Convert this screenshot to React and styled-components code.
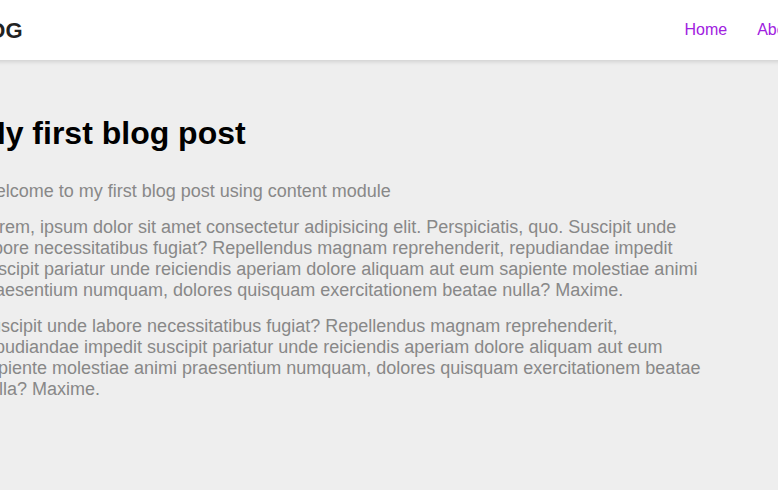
import React from 'react'
import styled, { createGlobalStyle } from 'styled-components'

const GlobalStyle = createGlobalStyle`
  html, body {
    margin: 0;
    padding: 0;
    background: #eeeeee;
    overflow: hidden;
  }
  body {
    font-family: "Liberation Sans", Arial, sans-serif;
  }
`

const links = ['Home', 'About']

function App () {
  return (
    <>
      <GlobalStyle />
      <Viewport>
        <Page>
          <Header>
            <Logo>BLOG</Logo>
            <Nav>
              {links.map(link => (
                <NavLink key={link} href='#'>{link}</NavLink>
              ))}
            </Nav>
          </Header>

          <Main>
            <Title>My first blog post</Title>
            <Subtitle>Welcome to my first blog post using content module</Subtitle>
            <Paragraph>
              Lorem, ipsum dolor sit amet consectetur adipisicing elit. Perspiciatis, quo. Suscipit unde
              labore necessitatibus fugiat? Repellendus magnam reprehenderit, repudiandae impedit suscipit
              pariatur unde reiciendis aperiam dolore aliquam aut eum sapiente molestiae animi praesentium
              numquam, dolores quisquam exercitationem beatae nulla? Maxime.
            </Paragraph>
            <Paragraph>
              Suscipit unde labore necessitatibus fugiat? Repellendus magnam reprehenderit, repudiandae
              impedit suscipit pariatur unde reiciendis aperiam dolore aliquam aut eum sapiente molestiae
              animi praesentium numquam, dolores quisquam exercitationem beatae nulla? Maxime.
            </Paragraph>
          </Main>
        </Page>
      </Viewport>
    </>
  )
}

const Viewport = styled.div`
  display: flex;
  justify-content: center;
  min-height: 100vh;
  width: 100%;
`

const Page = styled.div`
  flex: 0 0 860px;
  width: 860px;
  background: #eeeeee;
`

const Header = styled.header`
  align-items: center;
  background: #ffffff;
  box-shadow: 0 2px 4px rgba(0, 0, 0, 0.12);
  box-sizing: border-box;
  display: flex;
  height: 60px;
  justify-content: space-between;
  padding: 0 20px 0 0;
`

const Logo = styled.div`
  color: #222222;
  font-size: 22px;
  font-weight: 700;
  margin-top: 2px;
`

const Nav = styled.nav`
  display: flex;
  gap: 30px;
`

const NavLink = styled.a`
  color: #a020e0;
  font-size: 16px;
  text-decoration: none;
`

const Main = styled.main`
  box-sizing: border-box;
  max-width: 748px;
  padding: 55px 0 40px 20px;
`

const Title = styled.h1`
  color: #000000;
  font-size: 32px;
  font-weight: 700;
  margin: 0 0 29px;
`

const Subtitle = styled.p`
  color: #888888;
  font-size: 18px;
  margin: 0 0 15px;
`

const Paragraph = styled.p`
  color: #888888;
  font-size: 18px;
  margin: 0 0 15px;
`

export default App
